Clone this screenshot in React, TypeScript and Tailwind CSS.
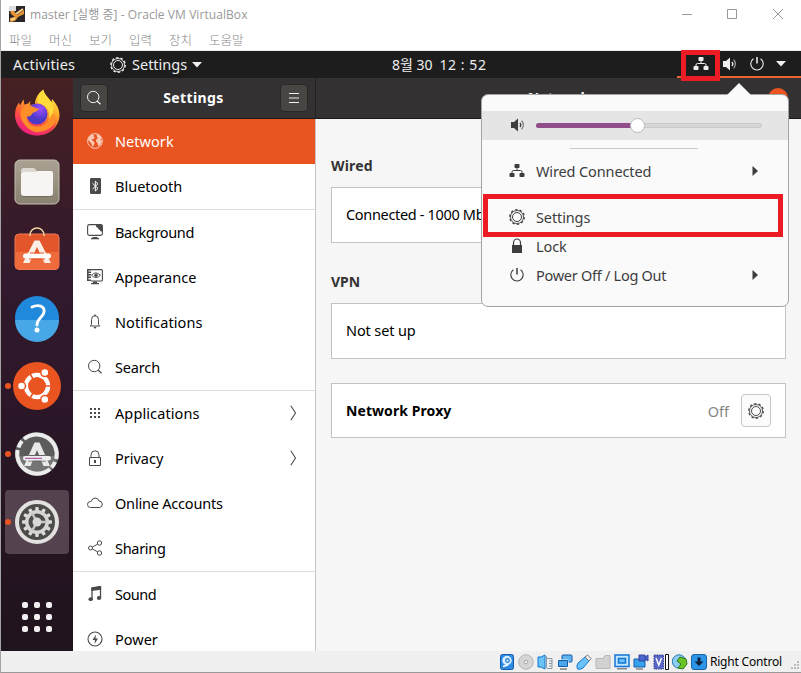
import React from 'react';
import type { ReactNode } from 'react';

type P = { className?: string };

function Gear({ className = 'size-4' }: P) {
  return (
    <svg viewBox="0 0 16 16" className={className} fill="none" stroke="currentColor">
      <circle cx="8" cy="8" r="7.300" strokeWidth="1.200" strokeDasharray="2.500 2.087" />
      <circle cx="8" cy="8" r="6.500" strokeWidth="0.900" />
      <circle cx="8" cy="8" r="4.500" strokeWidth="1" />
    </svg>
  );
}

function NetIcon({ className = '' }: P) {
  return (
    <svg viewBox="0 0 16 16" className={`size-4 ${className}`} fill="currentColor">
      <rect x="5.5" y="1" width="5" height="4" rx="0.7" />
      <rect x="0.5" y="10" width="5" height="4" rx="0.9" />
      <rect x="10.5" y="10" width="5" height="4" rx="0.9" />
      <path d="M8 5v2.5M3 10V9q0-1.500 1.500-1.500h7Q13 7.500 13 9v1" fill="none" stroke="currentColor" />
    </svg>
  );
}

function Volume({ className = '' }: P) {
  return (
    <svg viewBox="0 0 16 16" className={`size-4 ${className}`} fill="none">
      <path d="M1 5h3l4-3.500v13L4 11H1z" fill="currentColor" />
      <path d="M10 6q1.600 2 0 4" stroke="currentColor" strokeWidth="1.3" />
      <path d="M11.700 3.700q3.300 4.300 0 8.600" stroke="currentColor" strokeWidth="1.2" opacity="0.65" />
    </svg>
  );
}

function PowerGlyph({ className = '' }: P) {
  return (
    <svg viewBox="0 0 16 16" className={`size-4 ${className}`} fill="none" stroke="currentColor" strokeWidth="1.100">
      <path d="M4.400 2.700a6.200 6.200 0 1 0 7.200 0" />
      <path d="M8 1v6.500" strokeWidth="1.500" />
    </svg>
  );
}

function SearchGlyph({ className = '' }: P) {
  return (
    <svg viewBox="0 0 16 16" className={`size-4 ${className}`} fill="none" stroke="currentColor">
      <circle cx="7.200" cy="7" r="5.700" />
      <path d="M11.300 11.200 14.500 14.300" strokeWidth="1.300" />
    </svg>
  );
}

const glyphs: Record<string, ReactNode> = {
  Network: (
    <>
      <circle cx="8" cy="8" r="7.400" fill="none" stroke="currentColor" />
      <path d="M1.500 4.500 5 1.500l2 .5-.6 1.400L8 4.500 6.500 6 5 6.200l-.3 1L7 8.500l.5 2-2 4L4.600 11 2.700 8.500 1 7zM9.500 1l3.500 1.500 1.500 3-1.200 1L15 8l-1.500 4-2.300 1L10.500 10 9 8.500 9.500 6l1.700-.8L10 4z" fill="currentColor" />
    </>
  ),
  Bluetooth: (
    <>
      <rect x="3" y="0" width="11" height="16" rx="1.300" fill="currentColor" />
      <path d="M5.500 5.300 11 10.400 8.300 13V3.200L11 5.800 5.500 11" fill="none" stroke="#fff" />
    </>
  ),
  Background: (
    <>
      <rect x="0.600" y="0.600" width="14.800" height="10.800" rx="1.800" fill="none" stroke="currentColor" strokeWidth="1.100" />
      <path d="M9 .5h5q1.500 0 1.500 1.500v5.500H14L9 2.500zM5.500 13h5v1.300h-5zM4 14h8v1.200H4z" fill="currentColor" />
      <path d="M10 3.500v3h3" stroke="#fff" fill="none" />
    </>
  ),
  Appearance: (
    <>
      <path d="M4 .6h10.400q1 0 1 1v9.400q0 1-1 1H4" fill="none" stroke="currentColor" strokeWidth="1.100" />
      <path d="M0 0h4v1.500H1.500v1H4V4H1.500v1H4v1.500H1.500v1H4V9H1.500v1.500H4V12H0zM6 12.500h4V14H6zM4 14h8v1.200H4z" fill="currentColor" />
      <path d="M4.500 6.200q4-4.700 9 0-4.500 4.800-9 0" fill="none" stroke="currentColor" strokeWidth="0.900" />
      <circle cx="9" cy="6.200" r="1.700" fill="currentColor" />
    </>
  ),
  Notifications: (
    <>
      <path d="M4.500 10.500V5.700a3.500 4 0 0 1 7 0v4.800l1.300 1.500H3.200z" fill="none" stroke="currentColor" />
      <path d="M7.300.5h1.400v1.700H7.300zM6.500 13h3L8.500 14.500h-1z" fill="currentColor" />
    </>
  ),
  Search: (
    <>
      <circle cx="7.200" cy="7" r="5.700" fill="none" stroke="currentColor" />
      <path d="m11.300 11.200 3.200 3.100" stroke="currentColor" strokeWidth="1.300" />
    </>
  ),
  Applications: <path d="M3 3h2v2H3zm4 0h2v2H7zm4 0h2v2h-2zM3 7h2v2H3zm4 0h2v2H7zm4 0h2v2h-2zM3 11h2v2H3zm4 0h2v2H7zm4 0h2v2h-2z" fill="currentColor" />,
  Privacy: (
    <>
      <path d="M2.500 7.500h11v8h-11zM4 7.500V4.800a4 4 0 0 1 8 0v2.700" fill="none" stroke="currentColor" />
      <path d="M7 10h2v3H7z" fill="currentColor" />
    </>
  ),
  'Online Accounts': (
    <path d="M3.500 12.500a3 3 0 0 1 0-6h.7a4.100 4.300 0 0 1 7.900-.5 3.300 3.300 0 0 1 .7 6.500z" fill="none" stroke="currentColor" />
  ),
  Sharing: (
    <g fill="none" stroke="currentColor">
      <circle cx="3.500" cy="8" r="2" /><circle cx="12.500" cy="3" r="2.200" /><circle cx="12.500" cy="13" r="2.200" />
      <path d="m5.500 7 5-2.800M5.500 9l5 2.800" />
    </g>
  ),
  Sound: (
    <>
      <path d="M5 13V2l8.500-1.500V12" fill="none" stroke="currentColor" strokeWidth="1.300" />
      <path d="M4.400 1.500 14.100.3v3.500L4.400 5z" fill="currentColor" />
      <ellipse cx="3.700" cy="13.200" rx="2.200" ry="1.900" fill="currentColor" /><ellipse cx="12" cy="12" rx="2.200" ry="1.900" fill="currentColor" />
    </>
  ),
  Power: (
    <>
      <circle cx="8" cy="8" r="7" fill="none" stroke="currentColor" strokeWidth="1.100" />
      <path d="M9 3.500 5.500 9H8l-.5 4L11 7.500H8.500z" fill="currentColor" />
    </>
  ),
};

type Item = { name: string; track?: string; active?: boolean; arrow?: boolean; line?: boolean };

const items: Item[] = [
  { name: 'Network', track: 'tracking-[0.050px]', active: true },
  { name: 'Bluetooth', line: true },
  { name: 'Background', track: 'tracking-[-0.350px]' },
  { name: 'Appearance' },
  { name: 'Notifications', track: 'tracking-[0.100px]' },
  { name: 'Search', track: 'tracking-[-0.150px]', line: true },
  { name: 'Applications', track: 'tracking-[0.100px]', arrow: true },
  { name: 'Privacy', arrow: true },
  { name: 'Online Accounts', track: 'tracking-[-0.200px]' },
  { name: 'Sharing', track: 'tracking-[-0.300px]', line: true },
  { name: 'Sound', track: 'tracking-[-0.450px]' },
  { name: 'Power' },
];

function Row({ item }: { item: Item }) {
  return (
    <div className={`flex shrink-0 items-center pl-[14px] pr-[18px] ${item.line ? 'h-[46px] border-b border-[#dedede]' : 'h-[45px]'} ${item.active ? 'bg-[#e95420] text-white' : 'text-black'}`}>
      <svg viewBox="0 0 16 16" className={`mb-px mr-[12px] size-4 shrink-0 ${item.active ? 'text-[#f9c9b6]' : 'text-[#4a4a4a]'}`}>{glyphs[item.name]}</svg>
      <span className={`flex-1 pb-px ${item.track ?? ''}`}>{item.name}</span>
      {item.arrow && (
        <svg viewBox="0 0 8 16" className="mb-px h-4 w-2" fill="none" stroke="#4a4a4a" strokeWidth="1.100"><path d="M1.800.8 6.500 8l-4.700 7.200" /></svg>
      )}
    </div>
  );
}

function DockItem({ children, dot, active }: { children: ReactNode; dot?: boolean; active?: boolean }) {
  return (
    <div className={`relative mx-auto mb-1 flex size-16 shrink-0 items-center justify-center rounded ${active ? 'bg-[#54424f]' : ''}`}>
      {dot && <span className="absolute left-0 top-[29px] size-[6px] rounded-full bg-[#e95420]" />}
      {children}
    </div>
  );
}

const teeth = [0, 30, 60, 90, 120, 150, 180, 210, 240, 270, 300, 330];

function Dock() {
  return (
    <aside className="flex w-[72px] shrink-0 flex-col bg-linear-to-b from-[#462022] via-[#32192d] via-35% to-[#1f131d] pt-[4px]">
      <DockItem>
        <svg viewBox="0 0 48 48" className="size-12 -translate-y-px">
          <defs>
            <linearGradient id="fire" x1="0.800" y1="0" x2="0.300" y2="1">
              <stop offset="0" stopColor="#fff44f" /><stop offset=".35" stopColor="#ffb42b" /><stop offset=".65" stopColor="#ff5b35" /><stop offset="1" stopColor="#eb168c" />
            </linearGradient>
            <radialGradient id="globe" cx=".65" cy=".25"><stop offset="0" stopColor="#a34fff" /><stop offset="1" stopColor="#4b39c8" /></radialGradient>
          </defs>
          <path d="M24 46.500C11 46.500 2 37 2 25.500c0-5 2-9.500 4-12l1 3 3.500-6.200.8 5.200 4-1 2-2.500-.3 4 5-1C22 10 25 4 30.500.500c.5 5 5 7 8 13.500l.5-4c5 5 7.500 11 7.500 16C46.500 38 36 46.500 24 46.500z" fill="url(#fire)" />
          <circle cx="24" cy="25" r="10.500" fill="url(#globe)" />
          <path d="M8 21c3-4 8-5 13-3 2 2 4 1 5 2-2 3-6 3-7 5-2 3-4 3-5 2-1 8 7 12 14 10 8-2 11-11 6-17 7 3 9 9 7 15-5 9-16 12-25 5C9 34 6 27 8 21z" fill="#ff8e29" />
          <path d="M30 1c-5 4-6 10-5 13 7 1 13 7 11 16 7-8 5-15 1-19-3-3-6-5-7-10z" fill="#ffdc3c" />
          <path d="M7 33c7 12 24 14 36 1-4 9-12 12-20 12C15 46 9 40 7 33z" fill="#f22c68" opacity=".8" />
        </svg>
      </DockItem>
      <DockItem>
        <svg viewBox="0 0 48 48" className="size-12">
          <defs><linearGradient id="files" x1="0" x2="0" y1="0" y2="1"><stop stopColor="#aaa394" /><stop offset="1" stopColor="#89816f" /></linearGradient></defs>
          <rect x="2" y="2" width="44" height="44" rx="5" fill="url(#files)" stroke="#c2bbae" />
          <path d="M8 13q0-3 3-3h9q2 0 3 2l1 2H8z" fill="#ddd8d1" />
          <path d="M8 16q0-2 2-2h12l3-1h13q2 0 2 2v20q0 3-3 3H11q-3 0-3-3z" fill="#f6f5f3" />
          <path d="M9 38.500h30" stroke="#736c5e" />
        </svg>
      </DockItem>
      <DockItem>
        <svg viewBox="0 0 48 48" className="size-12 -translate-y-[2px]">
          <rect x="2" y="10" width="44" height="35.500" rx="4" fill="#e3562b" stroke="#ef7954" />
          <path d="M2.500 28h43v13q0 4-4 4h-35q-4 0-4-4z" fill="#f06b3c" />
          <path d="M17 12v-1a7 7 0 0 1 14 0v1" fill="none" stroke="#f0d29e" strokeWidth="1.500" />
          <path d="M21.500 16.500h5L38 39h-6.500l-7.500-16-7.500 16H10z" fill="#fbeee6" />
          <rect x="10" y="29.500" width="28" height="5" rx="2.500" fill="#fff" />
          <path d="M17 29h14M16 35h16" stroke="#e3562b" strokeWidth="1.200" />
        </svg>
      </DockItem>
      <DockItem>
        <svg viewBox="0 0 48 48" className="size-12">
          <circle cx="24" cy="24" r="22" fill="#2189dc" />
          <path d="M2 26h44a22 22 0 0 1-44 0z" fill="#48a8e7" />
          <path d="M19 13c6-3 13-1 12 5-.5 5-7 6-7 13" fill="none" stroke="#fff" strokeWidth="2.800" strokeLinecap="round" />
          <circle cx="24" cy="36" r="2.500" fill="#fff" />
        </svg>
      </DockItem>
      <DockItem dot>
        <svg viewBox="0 0 48 48" className="size-12">
          <circle cx="24" cy="24" r="24" fill="#e95420" />
          <circle cx="24" cy="24" r="11" fill="none" stroke="#fff" strokeWidth="4.500" />
          <path d="M24 24h16M24 24l-8-14M24 24l-8 14" stroke="#e95420" strokeWidth="1.600" />
          <circle cx="24" cy="24" r="8.700" fill="#e95420" />
          {[[8.500, 24], [31.800, 10.600], [31.800, 37.400]].map(([x, y]) => (
            <circle key={y} cx={x} cy={y} r="4" fill="#fff" stroke="#e95420" strokeWidth="1.500" />
          ))}
        </svg>
      </DockItem>
      <DockItem dot>
        <svg viewBox="0 0 48 48" className="size-12">
          <circle cx="24" cy="24" r="22" fill="#5c5c5c" />
          <path d="M4 26h40a20 20 0 0 1-40 0z" fill="#757575" />
          <path d="M11 9A20 20 0 0 1 43.200 29M42 32A20 20 0 0 1 38.500 37.500M37 39A20 20 0 0 1 4.500 20M5.500 17.500A20 20 0 0 1 9 11" fill="none" stroke="#ececec" strokeWidth="4" />
          <path d="M21.500 12.500h5L37 36h-6.500L24 20l-6.500 16H11z" fill="#e9e9e9" />
          <path d="M16 25.500h16M15 31h18" stroke="#626262" strokeWidth="1.200" />
          <rect x="10" y="26" width="28" height="4.500" rx="2.200" fill="#eee" /><path d="M12 28.300h17" stroke="#a03b9b" />
        </svg>
      </DockItem>
      <DockItem dot active>
        <svg viewBox="0 0 48 48" className="size-12">
          <circle cx="24" cy="24" r="20" fill="#4c4c4a" stroke="#e2e1df" strokeWidth="4" />
          {teeth.map((a) => <rect key={a} x="22.300" y="9" width="3.400" height="5" rx="1" fill="#ddd" transform={`rotate(${a} 24 24)`} />)}
          <circle cx="24" cy="24" r="10.300" fill="none" stroke="#d6d6d4" strokeWidth="3.500" />
          <path d="M24 24h10M24 24l-5-9M24 24l-5 9" stroke="#c6c6c4" strokeWidth="2.500" />
          <circle cx="24" cy="24" r="4.500" fill="#d8d8d6" />
        </svg>
      </DockItem>
      <div className="mx-auto mt-[44px] grid grid-cols-3 gap-[6px]">
        {teeth.slice(0, 9).map((n) => <i key={n} className="size-[6px] rounded-[2px] bg-[#f1eff0]" />)}
      </div>
    </aside>
  );
}

function StatusIcons() {
  const b = '#1476d1';
  return (
    <div className="flex gap-[3.200px]">
      <svg viewBox="0 0 16 16" className="size-4"><rect x="1.500" y=".5" width="13" height="15" rx="2" fill="#2b8be5" stroke="#155aa6" /><circle cx="8" cy="6.500" r="4.700" fill="#d9efff" /><circle cx="8.500" cy="6.500" r="1.800" fill="none" stroke={b} strokeWidth="1.200" /><path d="m4 12.500 5-1.500" stroke="#fff" strokeWidth="1.500" /></svg>
      <svg viewBox="0 0 16 16" className="size-4"><circle cx="8" cy="8" r="7.300" fill="#d6d6d6" stroke="#b5b5b5" /><circle cx="8" cy="8" r="1.800" fill="#eee" stroke="#aaa" /></svg>
      <svg viewBox="0 0 16 16" className="size-4"><path d="M1 3h3l4-2v14l-4-2H1z" fill="#69c4f5" stroke={b} /><path d="M9.500 2v12M10 4.500h5v10h-5M12 7h3m-3 2.500h3m-3 2.500h3" fill="none" stroke="#8c9aa5" /></svg>
      <svg viewBox="0 0 16 16" className="size-4"><rect x="5" y="1" width="10" height="7" rx="1" fill="#5fb5f3" stroke="#145ca5" /><rect x="1" y="6" width="10" height="7" rx="1" fill="#4ba7ec" stroke="#fff" /><path d="M1.500 6.500h9v6h-9z" fill="none" stroke="#145ca5" /><path d="M3 15h7" stroke="#444" /></svg>
      <svg viewBox="0 0 16 16" className="size-4"><path d="m2 9 7-6 4 4-6 7q-3 2-5.500 1Q0 12 2 9z" fill="#6bc2fa" stroke={b} /><path d="m9 3 2.500-2L15 4.500 13 7z" fill="#eee" stroke="#777" /></svg>
      <svg viewBox="0 0 16 16" className="size-4"><path d="M1 4.500h7L10 1.500h5v13H1z" fill="#d1d1d1" stroke="#b8b8b8" /></svg>
      <svg viewBox="0 0 16 16" className="size-4"><path d="M1 1h14v11.500H1z" fill="#bfe6ff" stroke={b} strokeWidth="1.500" /><path d="M4.500 4.500h7v4.500h-7z" fill="#6fc0fb" stroke={b} strokeWidth="1.500" /><path d="M3 14.800h10" stroke="#555" /></svg>
      <svg viewBox="0 0 16 16" className="size-4"><path d="M1 5h11v8H1z" fill="#36a2ee" stroke="#155aa6" /><path d="M6 1h6v6H6zM12 3l3-2v6l-3-2" fill="#4964cf" stroke="#3446a0" /><path d="M3 15h7" stroke="#555" /></svg>
      <svg viewBox="0 0 16 16" className="size-4"><path d="M1 1h9.500v14H1z" fill="#5968c7" stroke="#343f92" strokeDasharray="1.500 1" /><path d="m3 4 2.800 7 2.700-7" fill="none" stroke="#fff" strokeWidth="1.500" /><path d="M12.500.5h3v15h-3z" fill="#fff" stroke="#111" /></svg>
      <svg viewBox="0 0 16 16" className="size-4"><circle cx="7" cy="7.500" r="6.700" fill="#8dcdf3" stroke="#2779af" /><path d="m8 3 6 2 1 5-4 5-5-1 3-4-4-3z" fill="#6bc526" stroke="#2b7919" /></svg>
      <svg viewBox="0 0 16 16" className="size-4"><rect x=".5" y=".5" width="15" height="15" rx="2.500" fill="#2d95e8" stroke="#1b64a4" /><path d="M6.500 3.500h3v4h3L8 12 3.500 7.500h3z" fill="#10243d" /></svg>
    </div>
  );
}

function MenuRow({ icon, label, arrow, className = '' }: { icon: ReactNode; label: string; arrow?: boolean; className?: string }) {
  return (
    <div className={`flex h-[29px] items-center pl-[27px] pr-[30px] ${className}`}>
      {icon}
      <span className="ml-[11px] flex-1 pb-px">{label}</span>
      {arrow && <svg viewBox="0 0 6 10" className="mb-px h-[10px] w-[6px]"><path d="M.5 0 6 5 .5 10z" fill="currentColor" /></svg>}
    </div>
  );
}

function SystemMenu() {
  return (
    <div className="absolute left-[480px] top-[94px] h-[213px] w-[308px] rounded-[7px] border border-[#a4a4a4] bg-[#fafafa] tracking-[-0.120px] text-[#3d3d3d]">
      <svg viewBox="0 0 26 13" className="absolute left-[244px] top-[-12px] h-[13px] w-[26px]"><path d="M0 13 13 0l13 13z" fill="#fafafa" /></svg>
      <div className="mt-4 flex h-[29px] items-center bg-[#e5e5e5] pl-[28px] pr-[26px]">
        <Volume className="mb-px" />
        <div className="relative ml-[10px] h-[5px] flex-1 rounded-full border border-[#c9c9c9] bg-[#d6d6d6]">
          <div className="absolute -left-px -top-px h-[5px] w-[102px] rounded-full bg-[#924d8b]" />
          <div className="absolute left-[93px] top-[-6px] size-[15px] rounded-full border border-[#b9b9b9] bg-white" />
        </div>
      </div>
      <div className="ml-[88px] mt-2 h-px w-[128px] bg-[#c8c8c8]" />
      <MenuRow icon={<NetIcon className="mb-px" />} label="Wired Connected" arrow className="mt-[8px]" />
      <MenuRow icon={<Gear className="mb-px size-4" />} label="Settings" className="mt-[17px]" />
      <MenuRow icon={<svg viewBox="0 0 16 16" className="mb-px size-4"><path d="M3 7h10v8H3z" fill="currentColor" /><path d="M4.500 8V5a3.500 4 0 0 1 7 0v3" fill="none" stroke="currentColor" strokeWidth="1.200" /></svg>} label="Lock" />
      <MenuRow icon={<PowerGlyph className="mb-px" />} label="Power Off / Log Out" arrow className="tracking-[-0.270px]" />
      <div className="absolute left-[1px] top-[99px] h-[43px] w-[300px] border-[5px] border-[#ed1c24]" />
    </div>
  );
}

export default function App() {
  return (
    <div className="relative flex h-[673px] w-[801px] flex-col overflow-hidden border-l border-[#a3a3a3] bg-white font-['Noto_Sans','Noto_Sans_CJK_KR',sans-serif] text-[14.500px] leading-5">
      <div className="flex h-[28px] shrink-0 items-center pl-2 pr-[16px] font-['Open_Sans','Noto_Sans_CJK_KR',sans-serif] text-[12px] text-[#999]">
        <svg viewBox="0 0 16 16" className="size-4"><path d="M0 0h16v16H0z" fill="#292529" /><path d="M1 5h4l3 4 7-5v4l-6 3-3 4-5 1v-4l5-1-4-3z" fill="#e79432" /><path d="m7 8 7-5M2 14l4-2" stroke="#ffd58c" strokeWidth="2" /><path d="M0 0h7v5H0z" fill="#ddd" /></svg>
        <span className="ml-[5px] flex-1 pt-px tracking-[0.070px]">master [실행 중] - Oracle VM VirtualBox</span>
        <svg viewBox="0 0 104 12" className="h-3 w-[104px]" fill="none" stroke="#999"><path d="M1 6.500h10M46.500 1.500h9v9h-9zM92 1l10 10M102 1 92 11" /></svg>
      </div>
      <nav className="flex h-[23px] shrink-0 items-center gap-[17px] border-b border-[#ededed] pl-2 pt-[2px] font-['Noto_Sans_CJK_KR',sans-serif] text-[12.500px] font-light text-[#888]">
        {['파일', '머신', '보기', '입력', '장치', '도움말'].map((m) => <span key={m}>{m}</span>)}
      </nav>
      <header className="flex h-[27px] shrink-0 bg-[#1d1d1d] text-[#efefef]">
        <div className="flex w-[391px] items-center pl-3">
          <span className="w-[63px] pb-px tracking-[0.180px]">Activities</span>
          <Gear className="ml-[34px] size-4" />
          <span className="ml-[6px] w-[55px] pb-px">Settings</span>
          <svg viewBox="0 0 10 6" className="ml-[5px] h-[6px] w-[10px]"><path d="M0 0h10L5 5.500z" fill="currentColor" /></svg>
        </div>
        <div className="flex w-[285px] items-center whitespace-pre pt-px text-[14px]">8월 30<span className="ml-[7px] tracking-[0.550px]">12 : 52</span></div>
        <div className="flex flex-1 items-center border-b-2 border-[#e9622f] pl-4">
          <NetIcon />
          <Volume className="ml-[13px]" />
          <PowerGlyph className="ml-[11px]" />
          <svg viewBox="0 0 10 6" className="ml-[11px] h-[6px] w-[10px]"><path d="M0 0h10L5 5.500z" fill="currentColor" /></svg>
        </div>
      </header>
      <div className="flex h-[573px] shrink-0">
        <Dock />
        <section className="flex w-[242px] shrink-0 flex-col overflow-hidden">
          <div className="flex h-[41px] shrink-0 items-center justify-between border-b border-[#191717] bg-[#333132] px-[7px] font-bold text-white">
            <span className="flex size-[28px] items-center justify-center rounded border border-[#292828] bg-[#484643]"><SearchGlyph className="text-[#eee]" /></span>
            <span className="pr-px text-[14px] tracking-[0.400px]">Settings</span>
            <span className="flex size-[28px] items-center justify-center rounded border border-[#292828] bg-[#484643]"><svg viewBox="0 0 10 10" className="size-[10px]"><path d="M0 .5h10M0 5h10M0 9.500h10" stroke="#eee" /></svg></span>
          </div>
          {items.map((item) => <Row key={item.name} item={item} />)}
        </section>
        <div className="flex w-px shrink-0 flex-col bg-[#c6c6c6]"><div className="h-[41px] bg-[#232122]" /></div>
        <main className="flex flex-1 flex-col bg-[#f6f6f6]">
          <div className="relative h-[41px] border-b border-[#191717] bg-[#333132] text-center text-[14px] font-bold text-white">
            <div className="pt-[10px]">Network</div>
            <span className="absolute right-[13px] top-[10px] size-[20px] rounded-full bg-[#e95420]" />
          </div>
          <div className="flex flex-col px-[15px] text-black">
            <h2 className="mt-[37px] text-[14px] font-bold tracking-[0.150px] text-[#333]">Wired</h2>
            <div className="mt-[11px] flex h-[56px] items-center border border-[#c3c3c3] bg-white px-[14px] pb-[2px] tracking-[-0.330px]">Connected - 1000 Mb/s</div>
            <h2 className="mt-[29px] text-[14px] font-bold text-[#333]">VPN</h2>
            <div className="mt-[11px] flex h-[56px] items-center border border-[#c3c3c3] bg-white px-[14px] pb-[2px] tracking-[-0.120px]">Not set up</div>
            <div className="mt-6 flex h-[55px] items-center border border-[#c3c3c3] bg-white px-[14px]">
              <b className="flex-1 text-[14px] tracking-[0.080px]">Network Proxy</b>
              <span className="mr-[12px] text-[#858585]">Off</span>
              <span className="flex h-[33px] w-[30px] items-center justify-center rounded border border-[#c8c8c8] bg-[#fbfbfb] text-[#4a4a4a]"><Gear /></span>
            </div>
          </div>
        </main>
      </div>
      <footer className="flex h-[22px] shrink-0 items-center border-b border-[#999] bg-[#f0f0f0] pl-[498px] text-[12px] text-black">
        <StatusIcons />
        <span className="ml-[3px] w-[73px] whitespace-nowrap tracking-[-0.180px]">Right Control</span>
        <svg viewBox="0 0 8 8" className="ml-[8px] mt-[7px] size-2"><path d="M6 0h2v2H6zM3 3h2v2H3zm3 0h2v2H6zM0 6h2v2H0zm3 0h2v2H3zm3 0h2v2H6z" fill="#bbb" /></svg>
      </footer>
      <SystemMenu />
      <div className="absolute left-[680px] top-[50px] h-[31px] w-[39px] border-[5px] border-[#ed1c24]" />
    </div>
  );
}
